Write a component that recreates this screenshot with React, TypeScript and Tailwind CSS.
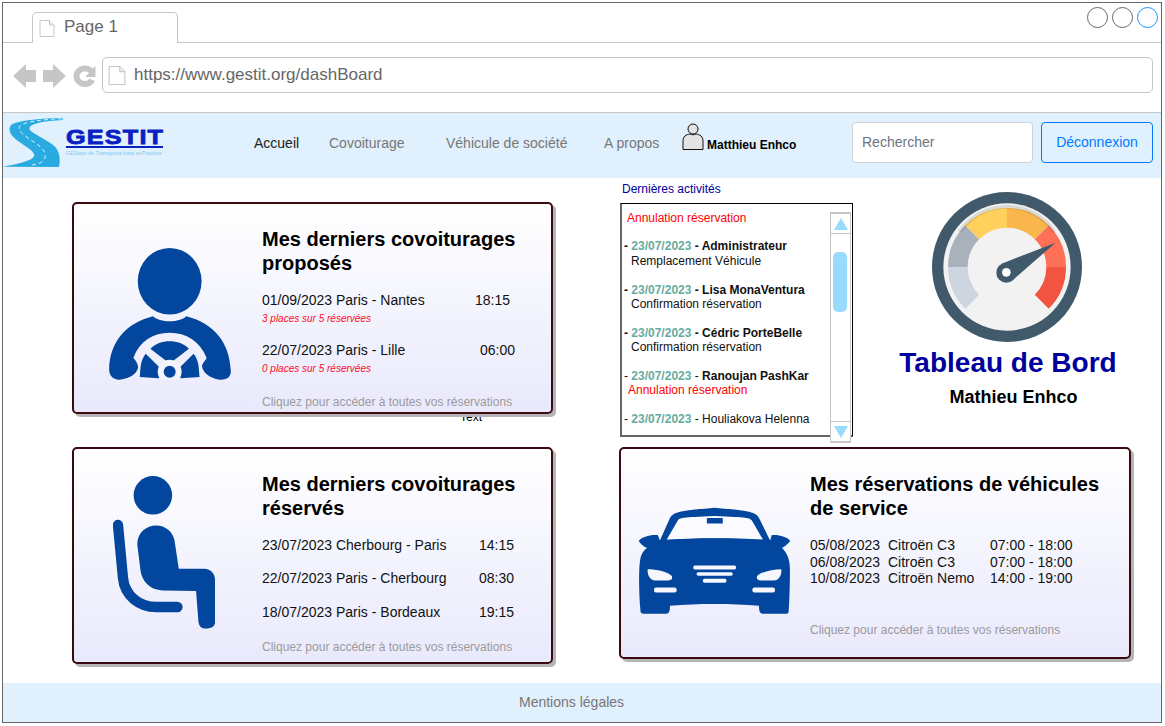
import React from "react";

const BLUE = "#03469e";

function PageIcon({ w, h }: { w: number; h: number }) {
  return (
    <svg width={w} height={h} viewBox="0 0 16 18" className="shrink-0">
      <path d="M1 1 H10.5 L15 5.5 V17 H1 Z" fill="#fff" stroke="#c8c8c8" strokeWidth="1" />
      <path d="M10.5 1 V5.5 H15" fill="#f0f0f0" stroke="#c8c8c8" strokeWidth="1" />
    </svg>
  );
}

function NavArrows() {
  return (
    <svg width="84" height="28" viewBox="0 0 84 28" className="shrink-0">
      <path d="M0 14 L13 2 V8 H23 V20 H13 V26 Z" fill="#c6c6c6" />
      <path d="M53 14 L40 2 V8 H30 V20 H40 V26 Z" fill="#c6c6c6" />
      <path d="M82.5 4 V15 H72 L76 11 C74.5 9.8 73.5 9.5 72 9.5 C69 9.5 66.5 11.5 66.5 14.3 C66.5 17 69 19 72 19 C74 19 75.8 18 76.6 16.6 L82 19.2 C80 23 76.3 25 72 25 C65.8 25 60.5 20.3 60.5 14.3 C60.5 8.3 65.8 3.5 72 3.5 C75 3.5 77.8 4.6 79.8 6.6 Z" fill="#c6c6c6" />
    </svg>
  );
}

function RoadLogo() {
  return (
    <svg width="60" height="50" viewBox="8 350 180 150" className="shrink-0">
      <path d="M187 352 C130 355 60 358 35 372 C20 385 30 405 50 420 C72 437 100 450 102 465 C100 482 45 493 8 499 L176 500 C180 480 180 460 165 440 C140 415 92 400 87 385 C87 370 130 362 187 359 Z" fill="#29abe2" />
      <path d="M185 355 C130 358 75 362 58 378 C50 395 80 410 105 428 C125 442 138 455 134 472 C128 488 110 492 95 494" fill="none" stroke="#fff" strokeWidth="2.5" strokeDasharray="12 9" />
    </svg>
  );
}

function UserIcon() {
  return (
    <svg width="22" height="27" viewBox="0 0 22 27" className="shrink-0">
      <circle cx="11" cy="6" r="5" fill="#e3e3e3" stroke="#111" strokeWidth="1" />
      <path d="M1 26.5 V18 C1 13.5 4 11.5 8 11 C10 12 12 12 14 11 C18 11.5 21 13.5 21 18 V26.5 Z" fill="#e3e3e3" stroke="#111" strokeWidth="1" />
    </svg>
  );
}

function DriverIcon() {
  return (
    <svg width="122" height="132" viewBox="148 160 366 397" className="block">
      <ellipse cx="330" cy="260" rx="96" ry="100" fill={BLUE} />
      <path d="M280 365 C300 385 360 385 380 365 C460 385 510 440 514 530 C514 550 500 557 480 556 C450 552 430 535 427 515 C430 503 440 497 441 490 C420 440 380 415 330 415 C280 415 240 440 221 490 C225 497 235 505 235 520 C230 540 210 552 180 556 C160 557 148 545 148 525 C150 440 200 385 280 365 Z" fill={BLUE} />
      <path d="M272 463 C300 433 360 433 388 463 L340 500 L320 500 Z" fill={BLUE} />
      <path d="M258 478 L302 522 L298 552 L240 548 C243 525 240 500 258 478 Z" fill={BLUE} />
      <path d="M402 478 L358 522 L362 552 L420 548 C417 525 420 500 402 478 Z" fill={BLUE} />
      <circle cx="330" cy="532" r="36" fill="#f3f4fd" />
      <circle cx="330" cy="532" r="18" fill={BLUE} />
    </svg>
  );
}

function SeatIcon() {
  return (
    <svg width="102" height="153" viewBox="160 110 307 458" className="block">
      <circle cx="280" cy="167" r="58" fill={BLUE} />
      <path d="M175 256 L190 415 C195 470 240 503 290 503 L354 503" fill="none" stroke={BLUE} strokeWidth="31" strokeLinecap="round" strokeLinejoin="round" />
      <path d="M233 315 C233 280 260 258 290 258 C320 258 345 280 347 315 L358 388 L435 388 C455 388 467 405 467 420 L467 550 C467 562 455 568 440 568 C425 568 418 560 417 545 L410 455 L310 453 C270 453 248 425 243 395 Z" fill={BLUE} />
    </svg>
  );
}

function CarIcon() {
  return (
    <svg width="153" height="107" viewBox="70 110 460 322" className="block">
      <path d="M135 212 L165 145 C175 125 190 122 300 112 C410 122 425 125 435 145 L468 212 Z" fill={BLUE} />
      <path d="M155 210 L190 150 C195 143 200 141 300 137 C400 141 405 143 412 150 L447 210 C350 203 250 203 155 210 Z" fill="#fbfbff" />
      <rect x="277" y="143" width="48" height="17" rx="2" fill={BLUE} />
      <path d="M72 212 C80 200 110 192 130 195 L135 209 C250 202 350 202 468 209 L472 195 C490 192 520 200 528 212 C520 222 510 230 503 233 C520 250 527 270 527 300 C527 350 525 400 523 425 C522 432 515 431 510 431 L445 431 C435 431 434 420 434 407 C350 400 250 400 166 407 C166 420 165 431 155 431 L85 431 C78 431 77 425 77 420 C72 370 72 300 76 270 C78 255 85 243 97 233 C88 230 78 222 72 212 Z" fill={BLUE} />
      <path d="M99 297 C125 297 160 305 172 318 C174 328 170 331 160 331 L122 331 C105 331 97 312 99 297 Z" fill="#f7f8ff" />
      <path d="M501 297 C475 297 440 305 428 318 C426 328 430 331 440 331 L478 331 C495 331 503 312 501 297 Z" fill="#f7f8ff" />
      <rect x="118" y="352" width="68" height="15" rx="6" fill="#f7f8ff" />
      <rect x="414" y="352" width="68" height="15" rx="6" fill="#f7f8ff" />
      <rect x="236" y="286" width="129" height="12" rx="5" fill="#f7f8ff" />
      <rect x="246" y="306" width="109" height="11" rx="5" fill="#f7f8ff" />
      <rect x="265" y="326" width="71" height="12" rx="5" fill="#f7f8ff" />
    </svg>
  );
}

function Gauge() {
  return (
    <svg width="150" height="150" viewBox="97 35 450 450" className="block">
      <circle cx="322" cy="260" r="225" fill="#415a6b" />
      <circle cx="322" cy="260" r="191" fill="#f2f2f2" />
      <path d="M145 260 A177 177 0 0 0 196.8 385.2 L238.6 343.4 A118 118 0 0 1 204 260 Z" fill="#cdd6e0" />
      <path d="M196.8 134.8 A177 177 0 0 0 145 260 L204 260 A118 118 0 0 1 238.6 176.6 Z" fill="#a9b2bc" />
      <path d="M322 83 A177 177 0 0 0 196.8 134.8 L238.6 176.6 A118 118 0 0 1 322 142 Z" fill="#ffd15c" />
      <path d="M447.2 134.8 A177 177 0 0 0 322 83 L322 142 A118 118 0 0 1 405.4 176.6 Z" fill="#f8b64c" />
      <path d="M499 260 A177 177 0 0 0 447.2 134.8 L405.4 176.6 A118 118 0 0 1 440 260 Z" fill="#ff7058" />
      <path d="M447.2 385.2 A177 177 0 0 0 499 260 L440 260 A118 118 0 0 1 405.4 343.4 Z" fill="#f1543f" />
      <path d="M180 155 A171 171 0 0 1 464 155" fill="none" stroke="#000" strokeOpacity="0.1" strokeWidth="12" />
      <circle cx="320" cy="277" r="30" fill="#415a6b" />
      <path d="M306 250 L468 187 L337 301 Z" fill="#415a6b" />
      <circle cx="320" cy="276" r="13" fill="#fff" />
    </svg>
  );
}

const cardClass =
  "relative z-10 rounded-[5px] border-2 border-[#3a0a0e] bg-gradient-to-b from-white to-[#e9e9fc] shadow-[3px_3px_0_#b5b5b5] flex";

function CardTitle({ a, b }: { a: string; b: string }) {
  return (
    <div className="text-[20px] leading-[24px] font-bold text-black">
      <div>{a}</div>
      <div>{b}</div>
    </div>
  );
}

function Row({ label, time, w, cls }: { label: string; time: string; w: string; cls: string }) {
  return (
    <div className={`flex text-[14px] leading-[16px] text-[#111] ${cls}`}>
      <span className={w}>{label}</span>
      <span>{time}</span>
    </div>
  );
}

function Places({ text }: { text: string }) {
  return <div className="mt-[5px] text-[10px] leading-[12px] italic text-[#ff0a1e]">{text}</div>;
}

function More({ cls }: { cls: string }) {
  return (
    <div className={`text-[12px] leading-[14px] whitespace-nowrap text-[#9a9a9a] ${cls}`}>
      Cliquez pour accéder à toutes vos réservations
    </div>
  );
}

function Who({ name, bold, dashBold }: { name: string; bold: boolean; dashBold: boolean }) {
  return (
    <div>
      <span className={dashBold ? "font-bold text-[#111]" : "text-[#111]"}>- </span>
      <span className="font-bold text-[#67ab9f]">23/07/2023</span>
      <span className={dashBold ? "font-bold text-[#111]" : "text-[#111]"}> - </span>
      <span className={bold ? "font-bold text-[#111]" : "text-[#111]"}>{name}</span>
    </div>
  );
}

function ScrollBtn({ up }: { up: boolean }) {
  return (
    <div className="h-[21px] bg-white border-y border-[#c6c6c6] flex items-center justify-center shrink-0">
      <svg width="14" height="12" viewBox="0 0 14 12">
        <path d={up ? "M7 0 L14 12 H0 Z" : "M7 12 L14 0 H0 Z"} fill="#99dbff" />
      </svg>
    </div>
  );
}

export default function App() {
  return (
    <div className="w-[1165px] h-[726px] bg-white overflow-hidden pl-[2px] pt-[2px] font-['Liberation_Sans',Arial,sans-serif]">
      <div className="w-[1160px] h-[721px] border border-[#666] flex flex-col">
        {/* Tabs */}
        <div className="h-[40px] border-b border-[#c6c6c6] flex shrink-0 pl-[29px]">
          <div className="mt-[9px] h-[31px] w-[146px] bg-white border border-b-0 border-[#c6c6c6] rounded-t-[5px] flex items-start pl-[6px] pt-[4px] gap-[9px] z-10">
            <div className="pt-[2px]">
              <PageIcon w={16} h={19} />
            </div>
            <span className="text-[17px] leading-[20px] text-[#666]">Page 1</span>
          </div>
          <div className="ml-auto mt-[4px] mr-[3px] flex gap-[4px]">
            <div className="w-[21px] h-[21px] rounded-full border border-[#666]" />
            <div className="w-[21px] h-[21px] rounded-full border border-[#666]" />
            <div className="w-[21px] h-[21px] rounded-full border border-[#1e90ff]" />
          </div>
        </div>
        {/* Address bar */}
        <div className="h-[70px] border-b border-[#c6c6c6] flex items-start shrink-0 pl-[10px]">
          <div className="mt-[19px]">
            <NavArrows />
          </div>
          <div className="mt-[14px] ml-[5px] w-[1051px] h-[36px] border border-[#c6c6c6] rounded-[5px] flex items-center pl-[5px] gap-[8px]">
            <PageIcon w={18} h={21} />
            <span className="text-[17px] text-[#666]">https://www.gestit.org/dashBoard</span>
          </div>
        </div>
        {/* Nav */}
        <div className="h-[65px] bg-[#e0f0fc] flex items-start shrink-0 text-[14px] leading-[20px] text-[#777]">
          <div className="mt-[4px]">
            <RoadLogo />
          </div>
          <div className="ml-[3px] w-[188px] mt-[14px] shrink-0">
            <div className="w-[97px] border-b-2 border-[#0a1fc4] h-[21px] overflow-visible">
              <div className="origin-left scale-x-[1.2] text-[21px] leading-[19px] tracking-[1px] font-black text-[#0a1fc4] [-webkit-text-stroke:0.8px_#0a1fc4] whitespace-nowrap">
                GESTIT
              </div>
            </div>
            <div className="mt-[2px] text-[5.5px] leading-[7px] text-[#7cc8f0] whitespace-nowrap">
              GEStion de Transports Intra enTreprise
            </div>
          </div>
          <span className="mt-[20px] text-[#222] w-[46px] shrink-0 whitespace-nowrap">Accueil</span>
          <span className="mt-[20px] ml-[29px] w-[76px] shrink-0 whitespace-nowrap">Covoiturage</span>
          <span className="mt-[20px] ml-[41px] w-[122px] shrink-0 whitespace-nowrap">Véhicule de société</span>
          <span className="mt-[20px] ml-[36px] w-[56px] shrink-0 whitespace-nowrap">A propos</span>
          <div className="ml-[22px] mt-[10px]">
            <UserIcon />
          </div>
          <span className="ml-[3px] mt-[23px] w-[90px] shrink-0 whitespace-nowrap text-[12px] leading-[18px] font-bold text-black">
            Matthieu Enhco
          </span>
          <div className="ml-[55px] mt-[9px] w-[181px] h-[41px] bg-white border border-[#ced4da] rounded-[4px] flex items-center pl-[9px] pb-[2px] text-[#6c757d]">
            Rechercher
          </div>
          <div className="ml-[8px] mt-[9px] w-[112px] h-[41px] border border-[#007bff] rounded-[4px] flex items-center justify-center pb-[2px] text-[#007bff]">
            Déconnexion
          </div>
        </div>
        {/* Main */}
        <div className="flex-1 flex min-h-0">
          <div className="relative w-[481px] ml-[69px] pt-[24px] shrink-0">
            <div className={`${cardClass} h-[212px]`}>
              <div className="w-[188px] shrink-0 pl-[35px] pt-[44px]">
                <DriverIcon />
              </div>
              <div className="pt-[23px] flex-1">
                <CardTitle a="Mes derniers covoiturages" b="proposés" />
                <Row label="01/09/2023 Paris - Nantes" time="18:15" w="w-[213px]" cls="mt-[17px]" />
                <Places text="3 places sur 5 réservées" />
                <Row label="22/07/2023 Paris - Lille" time="06:00" w="w-[218px]" cls="mt-[17px]" />
                <Places text="0 places sur 5 réservées" />
                <More cls="mt-[20px]" />
              </div>
            </div>
            <span className="absolute left-[388px] top-[232px] text-[12px] leading-[14px] text-black">Text</span>
            <div className={`${cardClass} h-[217px] mt-[33px]`}>
              <div className="w-[188px] shrink-0 pl-[39px] pt-[27px]">
                <SeatIcon />
              </div>
              <div className="pt-[23px] flex-1">
                <CardTitle a="Mes derniers covoiturages" b="réservés" />
                <Row label="23/07/2023 Cherbourg - Paris" time="14:15" w="w-[217px]" cls="mt-[17px]" />
                <Row label="22/07/2023 Paris - Cherbourg" time="08:30" w="w-[217px]" cls="mt-[17px]" />
                <Row label="18/07/2023 Paris - Bordeaux" time="19:15" w="w-[217px]" cls="mt-[18px]" />
                <More cls="mt-[20px]" />
              </div>
            </div>
          </div>
          <div className="ml-[66px] flex-1 min-w-0">
            <div className="flex h-[269px]">
              <div className="w-[234px] shrink-0 pt-[4px]">
                <div className="text-[12px] leading-[14px] text-[#00009c] pl-[3px]">Dernières activités</div>
                <div className="relative mt-[7px] ml-[1px] w-[233px] h-[234px] border border-black border-l-2 border-b-2 border-l-[#666] border-b-[#666] pl-[2px] pt-[7px] text-[12px] leading-[14px]">
                  <div className="text-[#ff0000] pl-[3px]">Annulation réservation</div>
                  <div className="mt-[14px]"><Who name="Administrateur" bold dashBold /></div>
                  <div className="mt-[1px] pl-[7px] text-[#111]">Remplacement Véhicule</div>
                  <div className="mt-[15px]"><Who name="Lisa MonaVentura" bold dashBold /></div>
                  <div className="pl-[7px] text-[#111]">Confirmation réservation</div>
                  <div className="mt-[15px]"><Who name="Cédric PorteBelle" bold dashBold /></div>
                  <div className="pl-[7px] text-[#111]">Confirmation réservation</div>
                  <div className="mt-[15px]"><Who name="Ranoujan PashKar" bold dashBold={false} /></div>
                  <div className="pl-[4px] text-[#ff0000]">Annulation réservation</div>
                  <div className="mt-[15px]"><Who name="Houliakova Helenna" bold={false} dashBold={false} /></div>
                  <div className="absolute left-[208px] top-[8px] w-[21px] h-[231px] flex flex-col bg-white border border-[#c6c6c6]">
                    <ScrollBtn up />
                    <div className="flex-1 px-[2px] pt-[18px]">
                      <div className="w-[14px] h-[60px] rounded-[5px] bg-[#99dbff]" />
                    </div>
                    <ScrollBtn up={false} />
                  </div>
                </div>
              </div>
              <div className="flex-1 flex flex-col items-center pt-[14px]">
                <Gauge />
                <div className="mt-[5px] pl-[2px] text-[28px] leading-[32px] font-bold text-[#00009c] whitespace-nowrap">Tableau de Bord</div>
                <div className="mt-[8px] pl-[13px] text-[18px] leading-[20px] font-bold text-black whitespace-nowrap">Mathieu Enhco</div>
              </div>
            </div>
            <div className={`${cardClass} w-[512px] h-[212px]`}>
              <div className="w-[189px] shrink-0 pl-[17px] pt-[58px]">
                <CarIcon />
              </div>
              <div className="pt-[23px] flex-1">
                <CardTitle a="Mes réservations de véhicules" b="de service" />
                <div className="mt-[17px] text-[14px] leading-[16.5px] text-[#111] grid grid-cols-[78px_102px_1fr]">
                  <span>05/08/2023</span><span>Citroën C3</span><span>07:00 - 18:00</span>
                  <span>06/08/2023</span><span>Citroën C3</span><span>07:00 - 18:00</span>
                  <span>10/08/2023</span><span>Citroën Nemo</span><span>14:00 - 19:00</span>
                </div>
                <More cls="mt-[36px]" />
              </div>
            </div>
          </div>
        </div>
        {/* Footer */}
        <div className="h-[39px] bg-[#e0f0fc] shrink-0 flex items-center pl-[516px] text-[14px] text-[#777]">
          Mentions légales
        </div>
      </div>
    </div>
  );
}
